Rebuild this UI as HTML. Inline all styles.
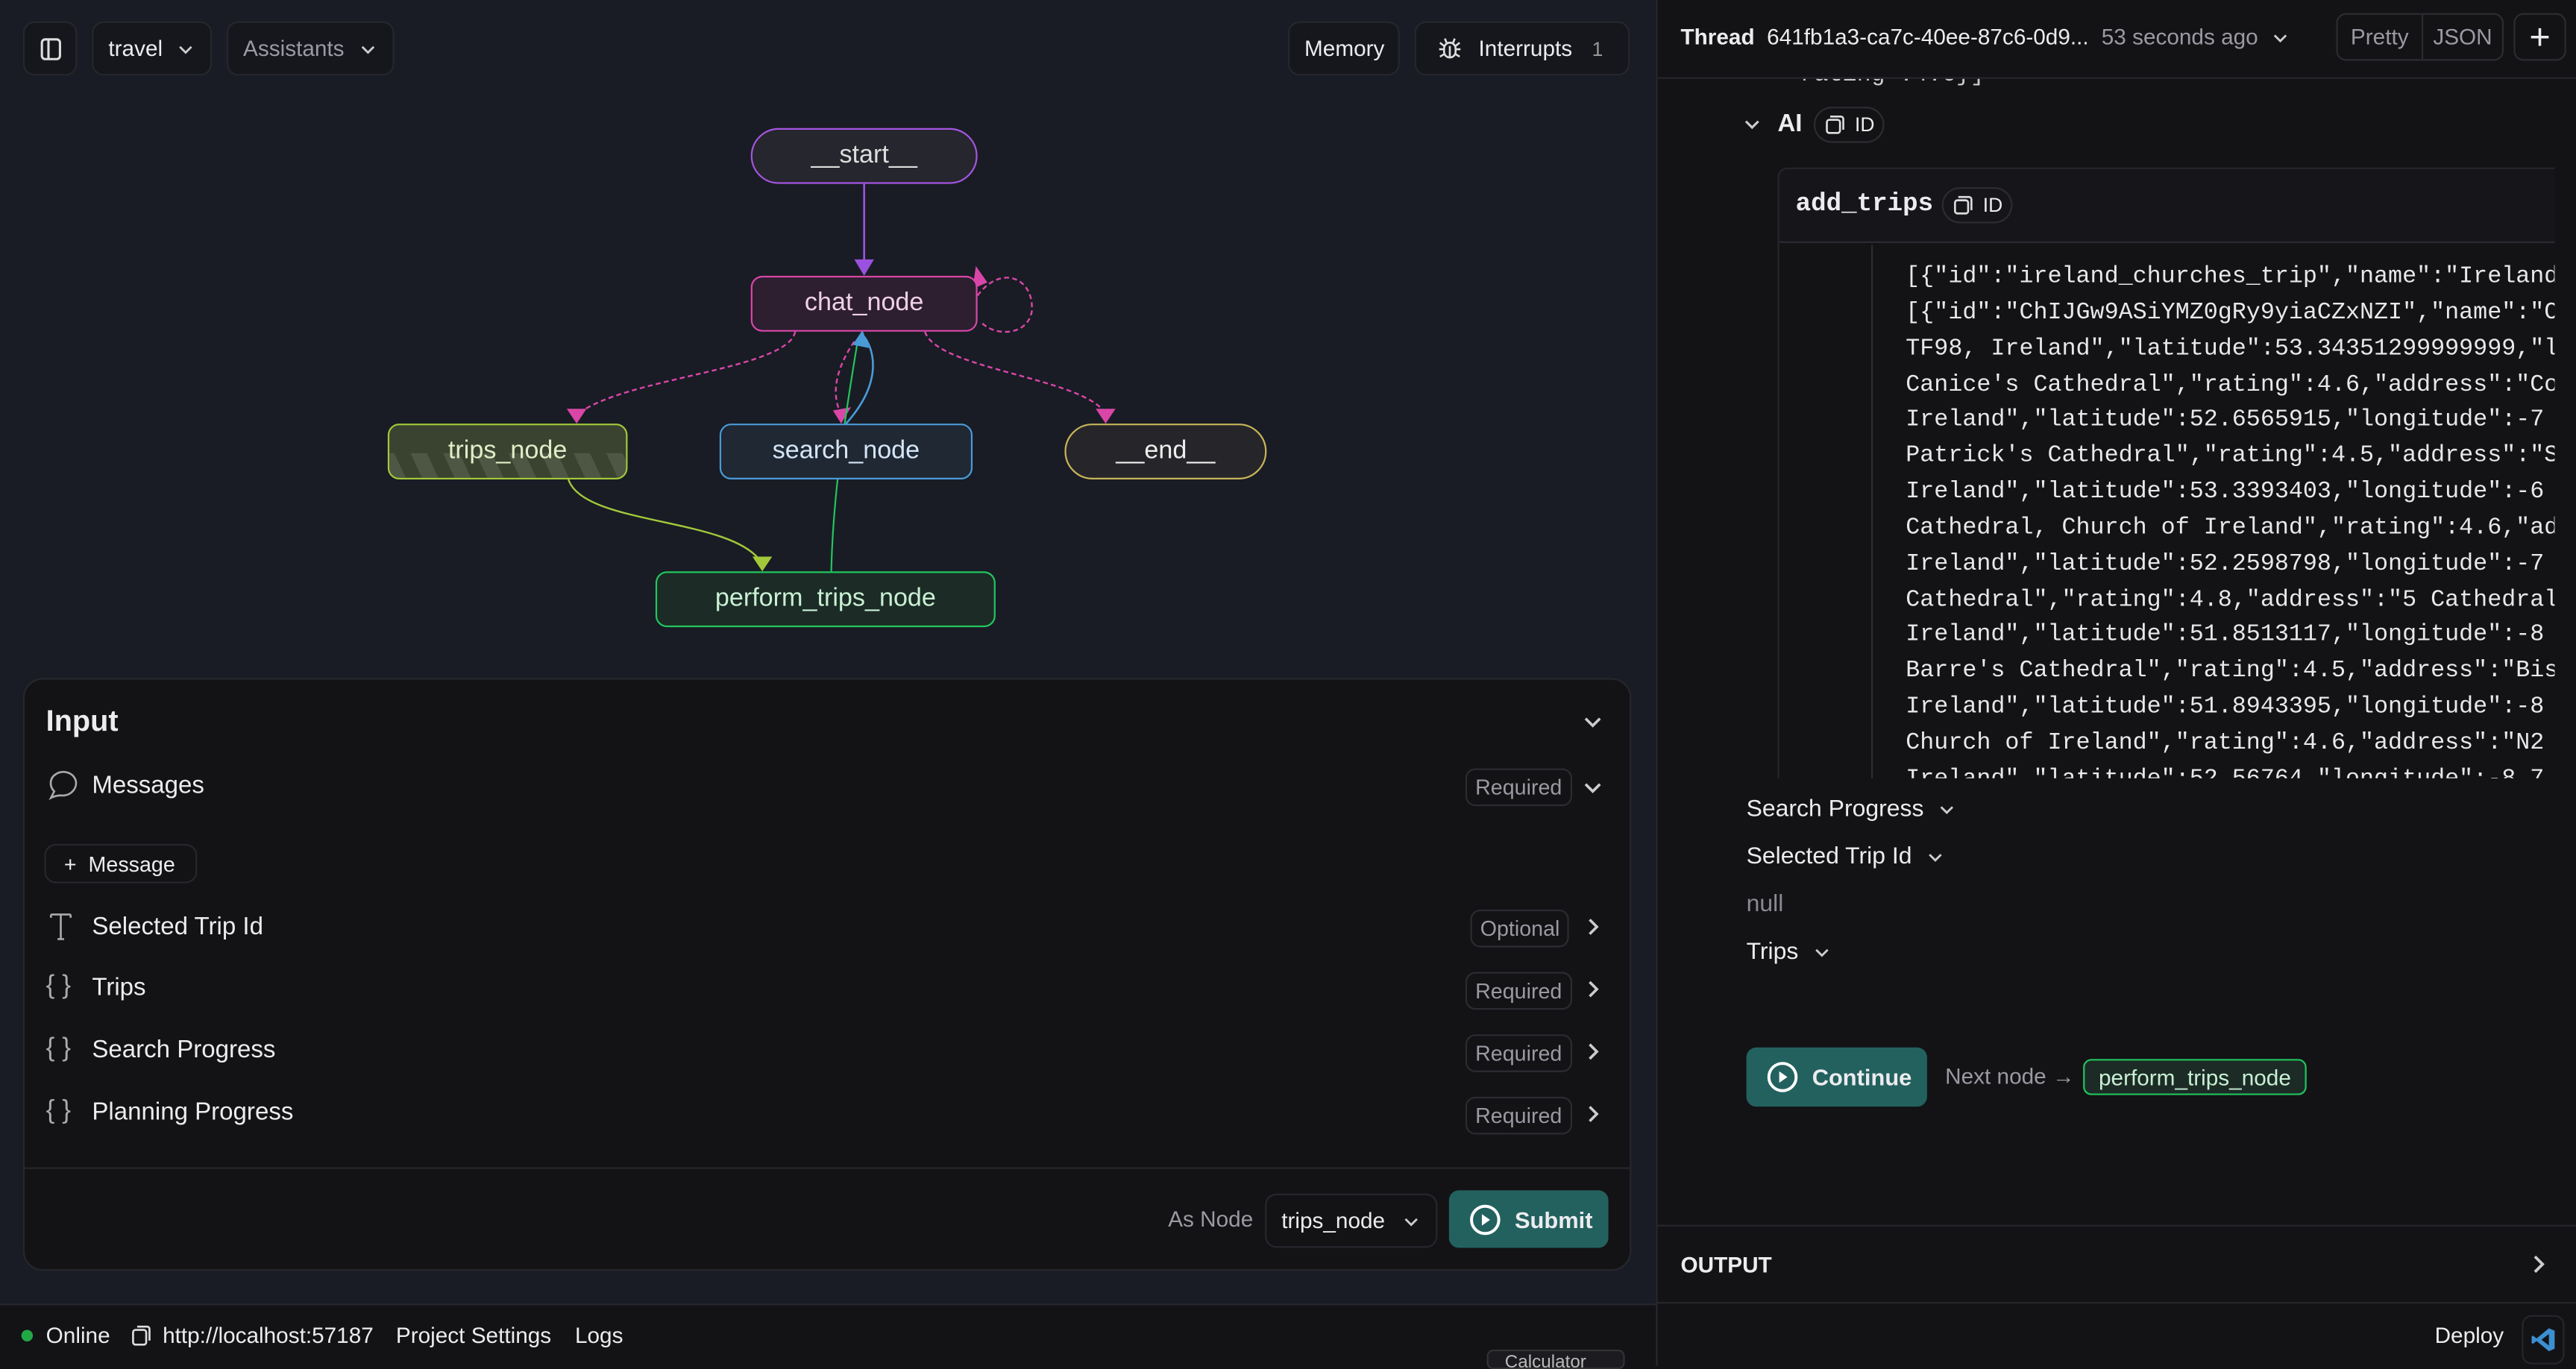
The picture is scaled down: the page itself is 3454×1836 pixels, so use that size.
<!DOCTYPE html>
<html><head><meta charset="utf-8">
<style>
*{box-sizing:border-box;margin:0;padding:0}
html,body{width:3454px;height:1832px;overflow:hidden;background:#131316}
#w{position:absolute;left:0;top:0;width:1568px;height:832px;transform:scale(2.20281,2.2019);transform-origin:0 0;font-family:"Liberation Sans",sans-serif;color:#ececef;background:#131316}
.a{position:absolute}
.btn{position:absolute;border:1px solid #26272c;border-radius:7px;background:#15171c;font-size:13.5px;display:flex;align-items:center;white-space:nowrap}
.node{position:absolute;height:34px;display:flex;align-items:center;justify-content:center;font-size:15.5px;border:1.5px solid;border-radius:7px}
.row{position:absolute;left:28px;font-size:15px;display:flex;align-items:center}
.badge{position:absolute;border:1px solid #2b2c31;border-radius:6px;font-size:13px;color:#9a9aa2;height:23px;display:flex;align-items:center;padding:0 5px}
.cd,.cr{position:absolute}
.mono{font-family:"Liberation Mono",monospace;font-size:14.4px;line-height:21.85px;color:#e8e8ea;white-space:pre}
</style></head><body><div id="w">
<svg width="0" height="0" style="position:absolute"><defs>
<symbol id="dn" viewBox="0 0 12 12"><path d="M2.5 4.5 L6 8 L9.5 4.5" fill="none" stroke="#ccc" stroke-width="1.3"/></symbol>
<symbol id="rt" viewBox="0 0 12 12"><path d="M4.5 2.5 L8 6 L4.5 9.5" fill="none" stroke="#ccc" stroke-width="1.3"/></symbol>
</defs></svg>
<div class="a" style="left:0;top:0;width:1008px;height:795px;background:#191c24"></div>
<div class="btn" style="left:14px;top:13px;width:33px;height:33px;justify-content:center"><svg width="14" height="14" viewBox="0 0 14 14"><rect x="1.5" y="1" width="11" height="12" rx="2" fill="none" stroke="#ddd" stroke-width="1.4"/><line x1="5.5" y1="1" x2="5.5" y2="13" stroke="#ddd" stroke-width="1.4"/></svg></div>
<div class="btn" style="left:56px;top:13px;width:73px;height:33px;padding-left:9px">travel <svg width="12" height="12" style="margin-left:8px"><use href="#dn"/></svg></div>
<div class="btn" style="left:138px;top:13px;width:102px;height:33px;padding-left:9px;color:#9a9ba2">Assistants <svg width="12" height="12" style="margin-left:8px"><use href="#dn"/></svg></div>
<div class="btn" style="left:784px;top:13px;width:68px;height:33px;padding-left:9px">Memory</div>
<div class="btn" style="left:861px;top:13px;width:131px;height:33px;padding-left:13px"><svg width="15" height="16" viewBox="0 0 15 16" fill="none" stroke="#ddd" stroke-width="1.2"><rect x="4" y="4" width="7" height="9" rx="3.5"/><path d="M5.5 4 L4.5 1.5 M9.5 4 L10.5 1.5 M1 8h3 M11 8h3 M1.5 12.5 L4 11 M13.5 12.5 L11 11 M1.5 4 L4 6 M13.5 4 L11 6 M7.5 6v7"/></svg><span style="margin-left:10px">Interrupts</span><span style="margin-left:12px;color:#999;font-size:12px">1</span></div>
<svg class="a" style="left:0;top:0" width="1008" height="400">
<line x1="526" y1="112" x2="526" y2="161" stroke="#9b51e0" stroke-width="1.2"/>
<polygon points="520,158 532,158 526,168" fill="#9b51e0"/>
<path d="M595 180 C610 160,630 170,628 190 C625 205,605 205,597 196" fill="none" stroke="#d946a8" stroke-width="1.1" stroke-dasharray="3,2"/>
<polygon points="594,162 601,172 592,176" fill="#d946a8"/>
<path d="M484 202 C480 225,380 230,352 252" fill="none" stroke="#d946a8" stroke-width="1.1" stroke-dasharray="3,2"/>
<polygon points="345,249 357,249 351,258" fill="#d946a8"/>
<path d="M563 202 C570 225,660 230,673 252" fill="none" stroke="#d946a8" stroke-width="1.1" stroke-dasharray="3,2"/>
<polygon points="667,249 679,249 673,258" fill="#d946a8"/>
<path d="M520 208 C505 230,508 245,512 252" fill="none" stroke="#d946a8" stroke-width="1.1" stroke-dasharray="3,2"/>
<polygon points="507,250 518,248 512,258" fill="#d946a8"/>
<path d="M506 348 C507 300,515 250,522 208" fill="none" stroke="#22c55e" stroke-width="1"/>
<path d="M515 258 C540 230,530 210,526 205" fill="none" stroke="#4a9ad8" stroke-width="1.2"/>
<polygon points="519,210 525,201 529,212" fill="#4a9ad8"/>
<path d="M346 292 C355 320,445 315,463 342" fill="none" stroke="#a3c93a" stroke-width="1.1"/>
<polygon points="458,339 470,339 464,348" fill="#a3c93a"/>
</svg>
<div class="node" style="left:457px;top:78px;width:138px;border-radius:17px;border-color:#a455e0;background:#26262e;color:#ddd">__start__</div>
<div class="node" style="left:457px;top:168px;width:138px;border-color:#d946a8;background:#2d1f30;color:#f0d0e6">chat_node</div>
<div class="node" style="left:236px;top:258px;width:146px;border-color:#a3c93a;background:#3a4330;color:#e2ecc8;overflow:hidden"><div style="position:absolute;left:0;right:0;bottom:0;height:15px;background:repeating-linear-gradient(65deg,#4e5743 0 9px,#3a4330 9px 18px)"></div><span style="position:relative">trips_node</span></div>
<div class="node" style="left:438px;top:258px;width:154px;border-color:#4a9ad8;background:#1f2833;color:#d5e5f5">search_node</div>
<div class="node" style="left:648px;top:258px;width:123px;border-radius:17px;border-color:#c8b45a;background:#26262a;color:#eee">__end__</div>
<div class="node" style="left:399px;top:348px;width:207px;border-color:#22c55e;background:#1c2b26;color:#c8f0d4">perform_trips_node</div>
<div class="a" style="left:14px;top:413px;width:979px;height:361px;background:#131316;border:1px solid #26272c;border-radius:12px"></div>
<div class="a" style="left:28px;top:429px;font-size:18px;font-weight:bold">Input</div>
<svg class="cd" style="left:962px;top:432px" width="15" height="15"><use href="#dn"/></svg>
<div class="row" style="top:468px"><svg width="20" height="20" viewBox="0 0 20 20" fill="none" stroke="#aaa" stroke-width="1.2"><path d="M3 18 L5 14 C2 11,2 6,6 3.5 C10 1,16 2,18 7 C19.5 12,15 17,9.5 16.5 C7 16.3,5 17,3 18Z"/></svg><span style="margin-left:8px">Messages</span></div>
<div class="badge" style="left:892px;top:468px">Required</div><svg class="cd" style="left:962px;top:472px" width="15" height="15"><use href="#dn"/></svg>
<div class="btn" style="left:27px;top:514px;width:93px;height:24px;padding-left:11px;font-size:13px;background:#131316">+&nbsp; Message</div>
<div class="row" style="top:554px"><svg width="20" height="20" viewBox="0 0 20 20" fill="none" stroke="#aaa" stroke-width="1.2"><path d="M3 3h12 M3 3v2 M15 3v2 M9 3v15 M7 18h4"/></svg><span style="margin-left:8px">Selected Trip Id</span></div>
<div class="badge" style="left:895px;top:554px">Optional</div><svg class="cr" style="left:962px;top:557px" width="15" height="15"><use href="#rt"/></svg>
<div class="row" style="top:592px"><span style="color:#aaa;font-size:16px;width:20px">{ }</span><span style="margin-left:8px">Trips</span></div>
<div class="badge" style="left:892px;top:592px">Required</div><svg class="cr" style="left:962px;top:595px" width="15" height="15"><use href="#rt"/></svg>
<div class="row" style="top:630px"><span style="color:#aaa;font-size:16px;width:20px">{ }</span><span style="margin-left:8px">Search Progress</span></div>
<div class="badge" style="left:892px;top:630px">Required</div><svg class="cr" style="left:962px;top:633px" width="15" height="15"><use href="#rt"/></svg>
<div class="row" style="top:668px"><span style="color:#aaa;font-size:16px;width:20px">{ }</span><span style="margin-left:8px">Planning Progress</span></div>
<div class="badge" style="left:892px;top:668px">Required</div><svg class="cr" style="left:962px;top:671px" width="15" height="15"><use href="#rt"/></svg>
<div class="a" style="left:15px;top:711px;width:977px;height:1px;background:#26272c"></div>
<div class="a" style="left:711px;top:735px;font-size:13.5px;color:#9a9aa2">As Node</div>
<div class="btn" style="left:770px;top:727px;width:105px;height:33px;padding-left:9px;background:#131316">trips_node <svg width="12" height="12" style="margin-left:10px"><use href="#dn"/></svg></div>
<div class="a" style="left:882px;top:725px;width:97px;height:35px;background:#23615f;border-radius:6px;display:flex;align-items:center;padding-left:12px;font-size:14px;font-weight:bold"><svg width="20" height="20" viewBox="0 0 20 20"><circle cx="10" cy="10" r="8.3" fill="none" stroke="#fff" stroke-width="1.8"/><path d="M8 6.5 L13 10 L8 13.5Z" fill="#fff"/></svg><span style="margin-left:8px">Submit</span></div>
<div class="a" style="left:0;top:794px;width:1008px;height:1px;background:#26272c"></div>
<div class="a" style="left:13px;top:810px;width:7px;height:7px;border-radius:50%;background:#22a845"></div>
<div class="a" style="left:28px;top:806px;font-size:13.5px">Online</div>
<svg class="a" style="left:80px;top:807px" width="12" height="13" viewBox="0 0 12 13" fill="none" stroke="#ddd" stroke-width="1.2"><rect x="1" y="3" width="8" height="9" rx="1.5"/><path d="M3.5 1h6a1.5 1.5 0 0 1 1.5 1.5v7"/></svg>
<div class="a" style="left:99px;top:806px;font-size:13.5px">http://localhost:57187</div>
<div class="a" style="left:241px;top:806px;font-size:13.5px">Project Settings</div>
<div class="a" style="left:350px;top:806px;font-size:13.5px">Logs</div>
<div class="a" style="left:905px;top:822px;width:84px;height:12px;border:1px solid #333;border-radius:4px;background:#1c1c20;font-size:11px;color:#bbb;padding-left:10px;overflow:hidden;line-height:14px">Calculator</div>
<div class="a" style="left:1008px;top:0;width:1px;height:832px;background:#26272c"></div>
<div class="a" style="left:1009px;top:0;width:559px;height:48px;background:#131316;border-bottom:1px solid #26272c;z-index:2"></div>
<div class="a" style="left:1023px;top:15px;font-size:13.5px;z-index:3;white-space:nowrap;display:flex;align-items:center"><b>Thread</b>&nbsp; 641fb1a3-ca7c-40ee-87c6-0d9... <span style="color:#9a9aa2;margin-left:4px">&nbsp;53 seconds ago</span> <svg width="12" height="12" style="margin-left:8px"><use href="#dn"/></svg></div>
<div class="a" style="left:1422px;top:8px;width:102px;height:29px;border:1px solid #2b2c31;border-radius:6px;z-index:3;display:flex;font-size:13.5px;color:#9a9aa2"><div style="width:52px;border-right:1px solid #2b2c31;display:flex;align-items:center;justify-content:center">Pretty</div><div style="flex:1;display:flex;align-items:center;justify-content:center">JSON</div></div>
<div class="a" style="left:1530px;top:8px;width:32px;height:29px;border:1px solid #2b2c31;border-radius:6px;z-index:3;display:flex;align-items:center;justify-content:center;font-size:22px;font-weight:300">+</div>
<div class="a mono" style="left:1087px;top:36px;color:#ccc">"rating":4.6}]</div>
<svg class="a" style="left:1060px;top:69px" width="13" height="13"><use href="#dn"/></svg>
<div class="a" style="left:1082px;top:67px;font-size:15px;font-weight:bold">AI</div>
<div class="a" style="left:1104px;top:65px;width:43px;height:22px;border:1px solid #2b2c31;border-radius:11px;font-size:12px;display:flex;align-items:center;padding-left:6px"><svg width="12" height="12" viewBox="0 0 12 12" fill="none" stroke="#ddd" stroke-width="1.2"><rect x="1" y="3" width="8" height="8" rx="1.5"/><path d="M3 1h6.5a1.5 1.5 0 0 1 1.5 1.5V9"/></svg><span style="margin-left:6px">ID</span></div>
<div class="a" style="left:1082px;top:102px;width:473px;height:372px;border-left:1px solid #26272c;border-top:1px solid #26272c;border-radius:6px 0 0 0;overflow:hidden">
 <div class="a" style="left:0;top:0;width:473px;height:45px;background:#16161a;border-bottom:1px solid #2b2c31"></div>
 <div class="a" style="left:10px;top:12px;font-family:'Liberation Mono',monospace;font-size:15.5px;font-weight:bold">add_trips</div>
 <div class="a" style="left:99px;top:11px;width:43px;height:22px;border:1px solid #2b2c31;border-radius:11px;font-size:12px;display:flex;align-items:center;padding-left:6px"><svg width="12" height="12" viewBox="0 0 12 12" fill="none" stroke="#ddd" stroke-width="1.2"><rect x="1" y="3" width="8" height="8" rx="1.5"/><path d="M3 1h6.5a1.5 1.5 0 0 1 1.5 1.5V9"/></svg><span style="margin-left:6px">ID</span></div>
 <div class="a" style="left:56px;top:46px;width:1px;height:330px;background:#2b2c31"></div>
 <div class="a mono" style="left:77px;top:56px">[{"id":"ireland_churches_trip","name":"Ireland
[{"id":"ChIJGw9ASiYMZ0gRy9yiaCZxNZI","name":"C
TF98, Ireland","latitude":53.34351299999999,"l
Canice's Cathedral","rating":4.6,"address":"Co
Ireland","latitude":52.6565915,"longitude":-7
Patrick's Cathedral","rating":4.5,"address":"S
Ireland","latitude":53.3393403,"longitude":-6
Cathedral, Church of Ireland","rating":4.6,"ad
Ireland","latitude":52.2598798,"longitude":-7
Cathedral","rating":4.8,"address":"5 Cathedral
Ireland","latitude":51.8513117,"longitude":-8
Barre's Cathedral","rating":4.5,"address":"Bis
Ireland","latitude":51.8943395,"longitude":-8
Church of Ireland","rating":4.6,"address":"N2
Ireland","latitude":52.56764,"longitude":-8.7</div>
</div>
<div class="a" style="left:1063px;top:485px;font-size:14.5px;display:flex;align-items:center">Search Progress <svg width="12" height="12" style="margin-left:8px"><use href="#dn"/></svg></div>
<div class="a" style="left:1063px;top:514px;font-size:14.5px;display:flex;align-items:center">Selected Trip Id <svg width="12" height="12" style="margin-left:8px"><use href="#dn"/></svg></div>
<div class="a" style="left:1063px;top:543px;font-size:14.5px;color:#8a8a92">null</div>
<div class="a" style="left:1063px;top:572px;font-size:14.5px;display:flex;align-items:center">Trips <svg width="12" height="12" style="margin-left:8px"><use href="#dn"/></svg></div>
<div class="a" style="left:1063px;top:638px;width:110px;height:36px;background:#23615f;border-radius:6px;display:flex;align-items:center;padding-left:12px;font-size:14px;font-weight:bold"><svg width="20" height="20" viewBox="0 0 20 20"><circle cx="10" cy="10" r="8.3" fill="none" stroke="#fff" stroke-width="1.8"/><path d="M8 6.5 L13 10 L8 13.5Z" fill="#fff"/></svg><span style="margin-left:8px">Continue</span></div>
<div class="a" style="left:1184px;top:648px;font-size:13.5px;color:#9a9aa2">Next node &#8594;</div>
<div class="a" style="left:1268px;top:645px;width:136px;height:22px;border:1px solid #22c55e;border-radius:5px;background:#1c2b26;color:#c8f0d4;font-size:13.5px;display:flex;align-items:center;justify-content:center">perform_trips_node</div>
<div class="a" style="left:1009px;top:746px;width:559px;height:1px;background:#26272c"></div>
<div class="a" style="left:1023px;top:763px;font-size:13.5px;font-weight:bold">OUTPUT</div>
<svg class="a" style="left:1537px;top:762px" width="16" height="16"><use href="#rt"/></svg>
<div class="a" style="left:1009px;top:793px;width:559px;height:1px;background:#26272c"></div>
<div class="a" style="left:1482px;top:806px;font-size:13.5px">Deploy</div>
<div class="a" style="left:1535px;top:801px;width:26px;height:30px;border:1px solid #26272c;border-radius:6px;display:flex;align-items:center;justify-content:center"><svg width="16" height="16" viewBox="0 0 16 16"><path d="M11.5 1 L15 2.5 V13.5 L11.5 15 L4 8.8 L1.8 10.5 L1 10 V6 L1.8 5.5 L4 7.2Z M11.5 4.5 L7 8 L11.5 11.5Z" fill="#3c8fd0" fill-rule="evenodd"/></svg></div>
</div></body></html>
